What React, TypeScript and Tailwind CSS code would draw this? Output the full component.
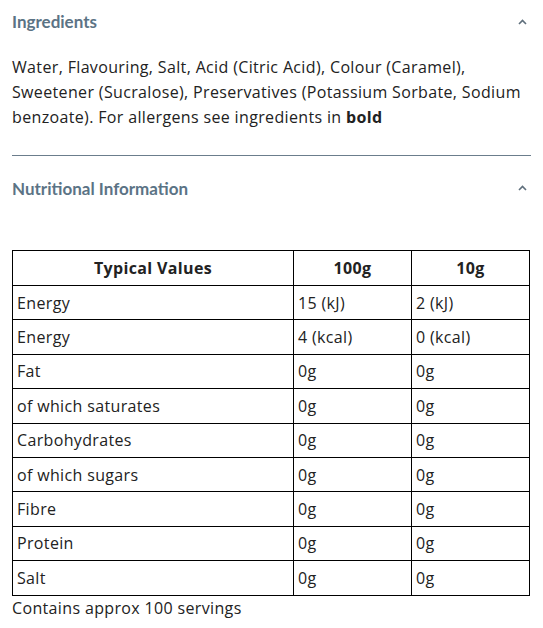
const rows = [
  ["Energy", "15 (kJ)", "2 (kJ)"],
  ["Energy", "4 (kcal)", "0 (kcal)"],
  ["Fat", "0g", "0g"],
  ["of which saturates", "0g", "0g"],
  ["Carbohydrates", "0g", "0g"],
  ["of which sugars", "0g", "0g"],
  ["Fibre", "0g", "0g"],
  ["Protein", "0g", "0g"],
  ["Salt", "0g", "0g"],
]

const Chevron = () => (
  <svg width="9" height="6" viewBox="0 0 9 6" className="text-[#5f6f7c]">
    <path d="M1 5 L4.5 1.5 L8 5" fill="none" stroke="currentColor" strokeWidth="1.6" />
  </svg>
)

const Heading = ({ title }: { title: string }) => (
  <div className="flex items-center justify-between pr-[4px]">
    <h3 className="text-[17px] font-bold text-[#5b7385] font-['Lato',sans-serif] tracking-normal">{title}</h3>
    <Chevron />
  </div>
)

export default function App() {
  return (
    <div className="w-[543px] h-[628px] bg-white px-3 text-[#222] font-['Open_Sans',sans-serif] text-[16px] tracking-[0.35px]">
      <div className="pt-[9px]">
        <Heading title="Ingredients" />
      </div>
      <p className="mt-[20px] leading-[25px]">
        Water, Flavouring, Salt, Acid (Citric Acid), Colour (Caramel),
        <br />
        Sweetener (Sucralose), Preservatives (Potassium Sorbate, Sodium
        <br />
        benzoate). For allergens see ingredients in <b>bold</b>
      </p>
      <div className="mt-[25px] border-t border-[#6b7d8c]" />
      <div className="pt-[20px]">
        <Heading title="Nutritional Information" />
      </div>

      <table className="mt-[49px] w-[518px] border-collapse border border-black">
        <thead>
          <tr className="h-[35px]">
            <th className="w-[281px] border border-black font-bold">Typical Values</th>
            <th className="w-[118px] border border-black font-bold">100g</th>
            <th className="border border-black font-bold">10g</th>
          </tr>
        </thead>
        <tbody>
          {rows.map((r, i) => (
            <tr key={i} className="h-[34.4px]">
              {r.map((c, j) => (
                <td key={j} className="border border-black pl-[4px] text-left">
                  {c}
                </td>
              ))}
            </tr>
          ))}
        </tbody>
      </table>
      <p className="mt-0">Contains approx 100 servings</p>
    </div>
  )
}
